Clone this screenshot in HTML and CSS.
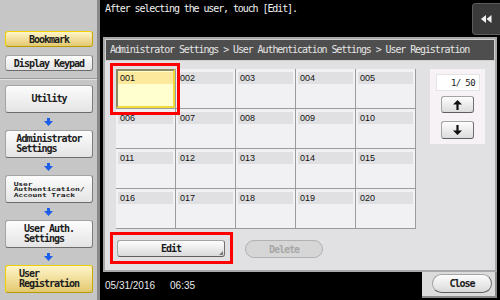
FILE: index.html
```html
<!DOCTYPE html>
<html lang="en">
<head>
    <meta charset="UTF-8">
    <title>User Registration</title>
    <link rel="stylesheet" href="styles.css">
</head>
<body>
<div class="screen">
    <aside class="sidebar">
        <div class="quick">
            <div class="side-btn small active">Bookmark</div>
            <div class="side-btn small">Display Keypad</div>
        </div>
        <div class="flow">
            <div class="side-btn"><span>Utility</span></div>
            <div class="arrow"><svg width="9" height="8" viewBox="0 0 9 8"><path d="M3 0h3v3h3L4.5 8 0 3h3z" fill="#1d5ee8"/></svg></div>
            <div class="side-btn"><span>Administrator<br>Settings</span></div>
            <div class="arrow"><svg width="9" height="8" viewBox="0 0 9 8"><path d="M3 0h3v3h3L4.5 8 0 3h3z" fill="#1d5ee8"/></svg></div>
            <div class="side-btn"><span class="tiny">User<br>Authentication/<br>Account Track</span></div>
            <div class="arrow"><svg width="9" height="8" viewBox="0 0 9 8"><path d="M3 0h3v3h3L4.5 8 0 3h3z" fill="#1d5ee8"/></svg></div>
            <div class="side-btn"><span>User Auth.<br>Settings</span></div>
            <div class="arrow"><svg width="9" height="8" viewBox="0 0 9 8"><path d="M3 0h3v3h3L4.5 8 0 3h3z" fill="#1d5ee8"/></svg></div>
            <div class="side-btn active"><span>User<br>Registration</span></div>
        </div>
    </aside>

    <main class="main">
        <div class="topbar">
            <div class="title">After selecting the user, touch [Edit].</div>
            <div class="back">
                <svg width="11" height="8" viewBox="0 0 11 8"><path d="M0 4l5-4v8zM5.5 4l5-4v8z" fill="#f2f2f2"/></svg>
            </div>
        </div>

        <div class="panel">
            <div class="crumbs">Administrator Settings &gt; User Authentication Settings &gt; User Registration</div>
            <div class="body">
                <div class="grid-row">
                    <div class="grid" id="grid"></div>
                    <div class="pager">
                        <div class="count">1/ 50</div>
                        <div class="page-btn up">
                            <svg width="9" height="10" viewBox="0 0 9 10"><path d="M4.5 0L9 4.5H5.6V10H3.4V4.5H0z" fill="#111"/></svg>
                        </div>
                        <div class="page-btn down">
                            <svg width="9" height="10" viewBox="0 0 9 10"><path d="M4.5 10L9 5.5H5.6V0H3.4v5.5H0z" fill="#111"/></svg>
                        </div>
                    </div>
                </div>
                <div class="actions">
                    <div class="btn edit">Edit</div>
                    <div class="btn delete">Delete</div>
                </div>
            </div>
        </div>

        <div class="footer">
            <div class="status"><span>05/31/2016</span><span>06:35</span></div>
            <div class="close-tab"><div class="btn close">Close</div></div>
        </div>
    </main>
</div>

<script>
    // Build the 20 user boxes
    const grid = document.getElementById('grid');
    for (let i = 1; i <= 20; i++) {
        const cell = document.createElement('div');
        cell.className = i === 1 ? 'cell selected' : 'cell';
        cell.innerHTML = `<div class="num">${String(i).padStart(3, '0')}</div>`;
        grid.appendChild(cell);
    }
</script>
</body>
</html>
```

FILE: styles.css
```css
body {
    margin: 0;
    width: 500px;
    height: 300px;
    overflow: hidden;
    font-family: "DejaVu Sans Mono", monospace;
    background: #000;
}
.screen {
    display: flex;
    height: 300px;
}

/* left column */
.sidebar {
    width: 97px;
    background: #c6c6c6;
    border-right: 3px solid #8a8a8a;
}
.quick {
    height: 79px;
    box-sizing: border-box;
    padding-top: 31px;
    display: flex;
    flex-direction: column;
    gap: 8px;
    border-bottom: 1px solid #9a9a9a;
}
.side-btn {
    margin-left: 5px;
    width: 88px;
    box-sizing: border-box;
    display: flex;
    align-items: center;
    justify-content: center;
    border: 1px solid #a4a4a4;
    border-right-color: #7c7c7c;
    border-bottom-color: #6c6c6c;
    border-radius: 3px;
    background: linear-gradient(#fcfcfc, #e4e4e4);
    color: #1c1c1c;
    font-size: 10px;
    font-weight: bold;
    letter-spacing: -1px;
}
.side-btn.small {
    height: 16px;
}
.side-btn.active {
    background: linear-gradient(#fff5c8, #e2c870);
    border-color: #f0d000;
    border-right-color: #c8a800;
    border-bottom-color: #b89a00;
}
.flow {
    padding-top: 5px;
    display: flex;
    flex-direction: column;
    border-top: 1px solid #e2e2e2;
}
.flow .side-btn {
    height: 28px;
}
.flow .side-btn span {
    display: inline-block;
    text-align: left;
    line-height: 10px;
}
.flow .side-btn .tiny {
    font-size: 8px;
    letter-spacing: -0.1px;
    line-height: 7px;
    transform: scaleY(0.75);
}
.arrow {
    height: 17px;
    display: flex;
    align-items: center;
    justify-content: center;
}

/* right side */
.main {
    flex: 1;
    display: flex;
    flex-direction: column;
    background: #000;
}
.topbar {
    height: 37px;
    display: flex;
    justify-content: space-between;
}
.title {
    color: #f0f0f0;
    font-size: 10px;
    letter-spacing: -1.1px;
    padding: 3px 0 0 5px;
}
.back {
    width: 27px;
    height: 30px;
    margin-top: 3px;
    background: #3a3a3a;
    border: 1px solid #5c5c5c;
    border-right: none;
    border-radius: 4px 0 0 4px;
    display: flex;
    align-items: center;
    justify-content: center;
}
.panel {
    margin: 0 3px;
    height: 235px;
    box-sizing: border-box;
    padding: 2px;
    background: #a8a8a8;
    display: flex;
    flex-direction: column;
}
.crumbs {
    height: 20px;
    line-height: 20px;
    padding-left: 4px;
    background: #4e4e4e;
    border: 1px solid #d0d0d0;
    color: #e6e6e6;
    font-size: 10px;
    letter-spacing: -1.1px;
    white-space: nowrap;
}
.body {
    flex: 1;
    background: #e1e0e3;
    padding: 8px 0 0 11px;
}
.grid-row {
    display: flex;
    align-items: flex-start;
}
.grid {
    display: grid;
    grid-template-columns: repeat(5, 59px);
    grid-auto-rows: 39px;
    gap: 1px;
    background: #9c9c9c;
    border-right: 1px solid #9c9c9c;
    border-bottom: 1px solid #9c9c9c;
}
.cell {
    position: relative;
    background: #f1f0f3;
    padding: 3px 2px 0;
}
.num {
    height: 12px;
    line-height: 12px;
    padding-left: 2px;
    background: #e0dfe2;
    color: #111;
    font-family: "Liberation Sans", sans-serif;
    font-size: 9px;
}
.cell.selected {
    z-index: 1;
    background: #ffffd0;
    border: 2px solid #f0da3a;
    border-top-color: #8e8a60;
    border-left-color: #8e8a60;
    padding: 1px 0 0;
}
.cell.selected .num {
    background: #fce99c;
}
.cell.selected::after {
    content: "";
    position: absolute;
    left: -8px;
    top: -8px;
    right: -7px;
    bottom: -9px;
    border: 3px solid #ff0000;
}
.pager {
    margin-left: 14px;
    width: 55px;
    height: 75px;
    box-sizing: border-box;
    padding: 5px 0 0 6px;
    background: #f6f2f6;
}
.count {
    width: 44px;
    height: 17px;
    box-sizing: border-box;
    line-height: 16px;
    padding-right: 4px;
    text-align: right;
    background: #fff;
    border: 1px solid #e4e4e4;
    color: #1a1a1a;
    font-size: 9px;
    letter-spacing: -0.6px;
}
.page-btn {
    width: 33px;
    height: 17px;
    box-sizing: border-box;
    margin: 5px 0 0 5px;
    display: flex;
    align-items: center;
    justify-content: center;
    border: 1px solid #a4a4a4;
    border-right-color: #6e6e6e;
    border-bottom-color: #5e5e5e;
    border-radius: 3px;
    background: linear-gradient(#fdfdfd, #dcdcdc);
}
.page-btn.down {
    margin-top: 8px;
    height: 18px;
}
.actions {
    display: flex;
    gap: 20px;
    margin-top: 11px;
    padding-left: 1px;
}
.btn {
    box-sizing: border-box;
    display: flex;
    align-items: center;
    justify-content: center;
    font-size: 10px;
    font-weight: bold;
    letter-spacing: -1px;
    color: #1a1a1a;
    border: 1px solid #a4a4a4;
    border-right-color: #6e6e6e;
    border-bottom-color: #5e5e5e;
    background: linear-gradient(#fdfdfd, #dadada);
}
.edit {
    position: relative;
    width: 108px;
    height: 17px;
    border-radius: 3px;
}
.edit::before {
    content: "";
    position: absolute;
    right: 1px;
    bottom: 1px;
    border-left: 4px solid transparent;
    border-bottom: 4px solid #7a7a7a;
}
.edit::after {
    content: "";
    position: absolute;
    left: -8px;
    top: -9px;
    right: -9px;
    bottom: -8px;
    border: 3px solid #ff0000;
}
.delete {
    width: 78px;
    height: 18px;
    border-radius: 9px;
    background: #d6d6d6;
    border-color: #b2b2b2;
    color: #a8a8a8;
}
.footer {
    height: 28px;
    display: flex;
}
.status {
    flex: 1;
    display: flex;
    gap: 15px;
    padding: 8px 0 0 5px;
    color: #eaeaea;
    font-family: "Liberation Sans", sans-serif;
    font-size: 10px;
}
.close-tab {
    width: 75px;
    margin-right: 3px;
    height: 26px;
    background: #dcdcdc;
    border-right: 2px solid #8a8a8a;
    border-bottom: 2px solid #8a8a8a;
    padding: 2px 0 0 10px;
    box-sizing: border-box;
}
.close {
    width: 60px;
    height: 19px;
    border-radius: 10px;
}
```
